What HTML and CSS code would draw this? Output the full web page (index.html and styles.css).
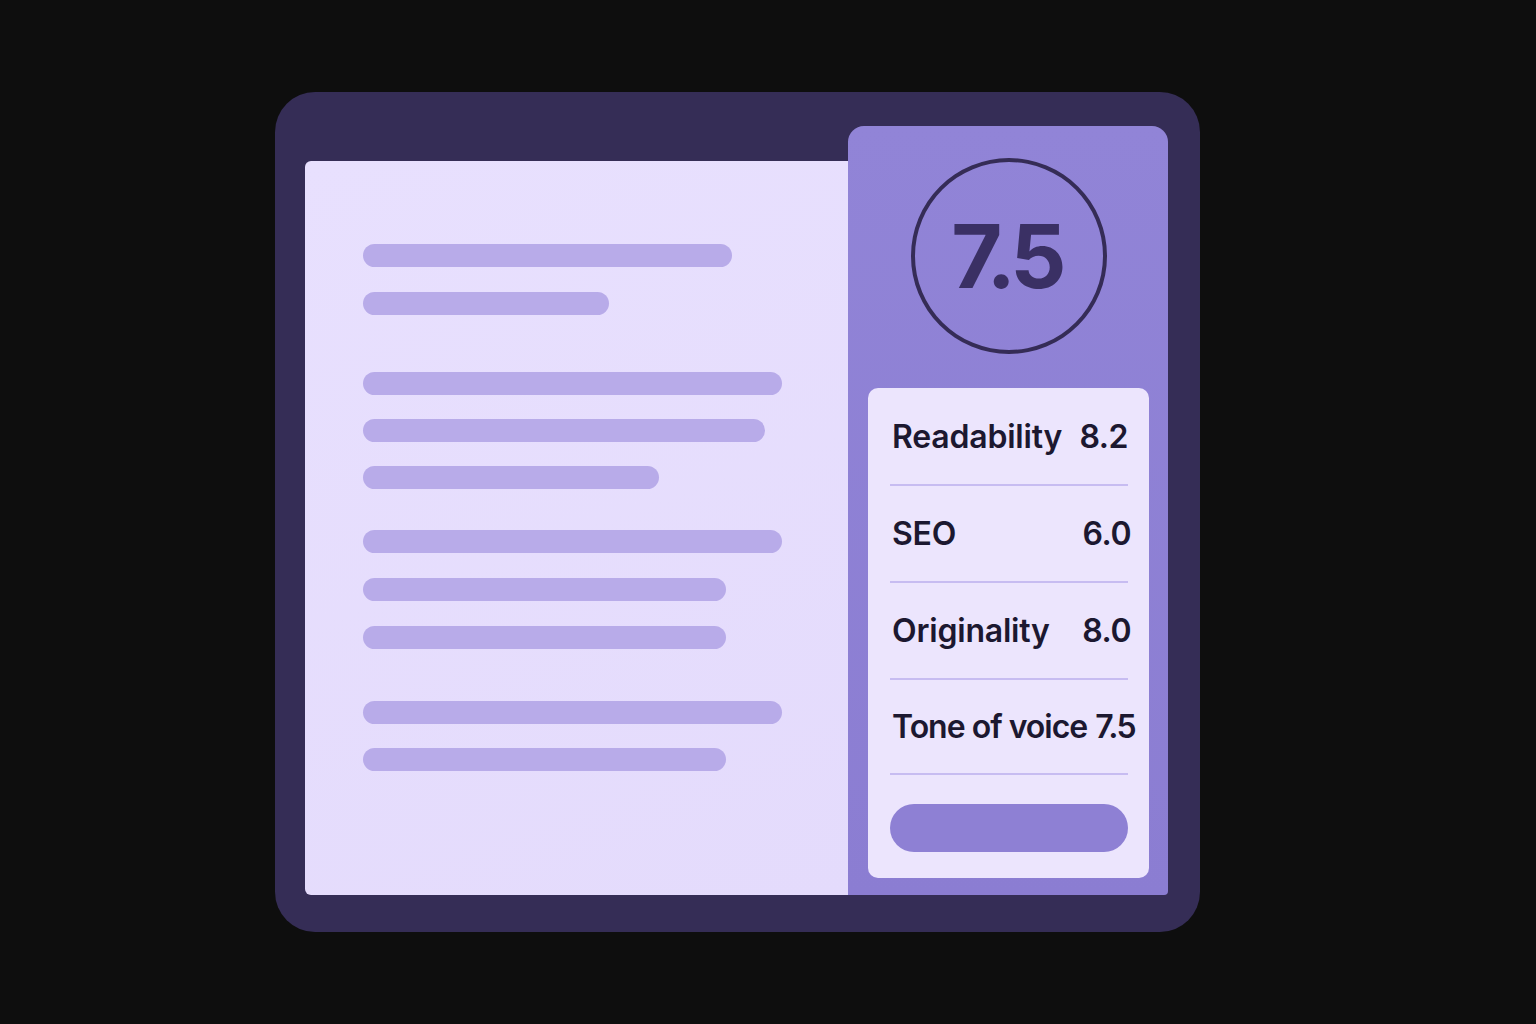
FILE: index.html
```html
<!DOCTYPE html>
<html>
<head>
<meta charset="utf-8">
<link rel="stylesheet" href="styles.css">
</head>
<body>
<div class="stage">
  <div class="frame">
    <div class="doc">
      <div class="group">
        <div class="bar w369"></div>
        <div class="bar w246"></div>
      </div>
      <div class="group g2">
        <div class="bar w419"></div>
        <div class="bar w402"></div>
        <div class="bar w296"></div>
      </div>
      <div class="group g3">
        <div class="bar w419"></div>
        <div class="bar w363"></div>
        <div class="bar w363"></div>
      </div>
      <div class="group g4">
        <div class="bar w419"></div>
        <div class="bar w363"></div>
      </div>
    </div>
    <div class="side">
      <div class="score"><span>7.5</span></div>
      <div class="card">
        <div class="row"><span class="label">Readability</span><span class="val v1">8.2</span></div>
        <div class="row"><span class="label">SEO</span><span class="val">6.0</span></div>
        <div class="row"><span class="label">Originality</span><span class="val">8.0</span></div>
        <div class="row last"><span class="label">Tone of voice</span><span class="val">7.5</span></div>
        <div class="btn"></div>
      </div>
    </div>
  </div>
</div>
</body>
</html>
```
FILE: styles.css
```css
html, body {
  margin: 0;
  padding: 0;
  background: #0e0e0e;
  font-family: Inter, "Noto Sans", sans-serif;
}
.stage {
  width: 1536px;
  height: 1024px;
  padding-top: 92px;
  padding-left: 275px;
  box-sizing: border-box;
}
.frame {
  width: 925px;
  height: 840px;
  box-sizing: border-box;
  background: #352d56;
  border-radius: 40px;
  padding: 34px 32px 37px 30px;
  display: flex;
  align-items: flex-end;
}
.doc {
  width: 543px;
  height: 734px;
  box-sizing: border-box;
  background: linear-gradient(160deg, #e8e0fe 0%, #e4dbfc 100%);
  border-radius: 6px 0 0 6px;
  padding: 83px 0 0 58px;
  display: flex;
  flex-direction: column;
}
.group {
  display: flex;
  flex-direction: column;
  gap: 25px;
}
.g2 { margin-top: 57px; gap: 24px; }
.g3 { margin-top: 41px; }
.g4 { margin-top: 52px; gap: 24px; }
.bar {
  height: 23px;
  border-radius: 12px;
  background: #b8abe9;
}
.w369 { width: 369px; }
.w246 { width: 246px; }
.w419 { width: 419px; }
.w402 { width: 402px; }
.w296 { width: 296px; }
.w363 { width: 363px; }
.side {
  width: 320px;
  height: 769px;
  box-sizing: border-box;
  background: linear-gradient(180deg, #9184d7 0%, #8b7dd2 100%);
  border-radius: 16px 16px 4px 0;
  padding: 32px 19px 17px 20px;
  display: flex;
  flex-direction: column;
  align-items: center;
}
.score {
  width: 196px;
  height: 196px;
  box-sizing: border-box;
  border: 4px solid #352c56;
  border-radius: 50%;
  display: flex;
  align-items: center;
  justify-content: center;
}
.score span {
  font-size: 88px;
  font-weight: 700;
  color: #3a3064;
  letter-spacing: -5px;
  line-height: 1;
  margin-left: -4px;
}
.card {
  margin-top: 34px;
  width: 281px;
  height: 491px;
  box-sizing: border-box;
  background: #ece5fd;
  border-radius: 10px;
  padding: 1px 21px 0 22px;
  display: flex;
  flex-direction: column;
}
.row {
  height: 97px;
  box-sizing: border-box;
  border-bottom: 2px solid #c7bcf1;
  display: flex;
  align-items: center;
  justify-content: space-between;
  padding: 0 0 0 2px;
  font-size: 32px;
  font-weight: 600;
  color: #1c1830;
  letter-spacing: -0.2px;
  white-space: nowrap;
}
.row .val { letter-spacing: -0.5px; margin-right: -3px; }
.row .v1 { margin-right: 0; }
.row.last { height: 95px; letter-spacing: -1px; justify-content: flex-start; gap: 8px; }
.row.last .val { letter-spacing: -1.5px; margin-right: -6px; }
.btn {
  margin-top: 29px;
  height: 48px;
  border-radius: 24px;
  background: #8e80d4;
}
```
